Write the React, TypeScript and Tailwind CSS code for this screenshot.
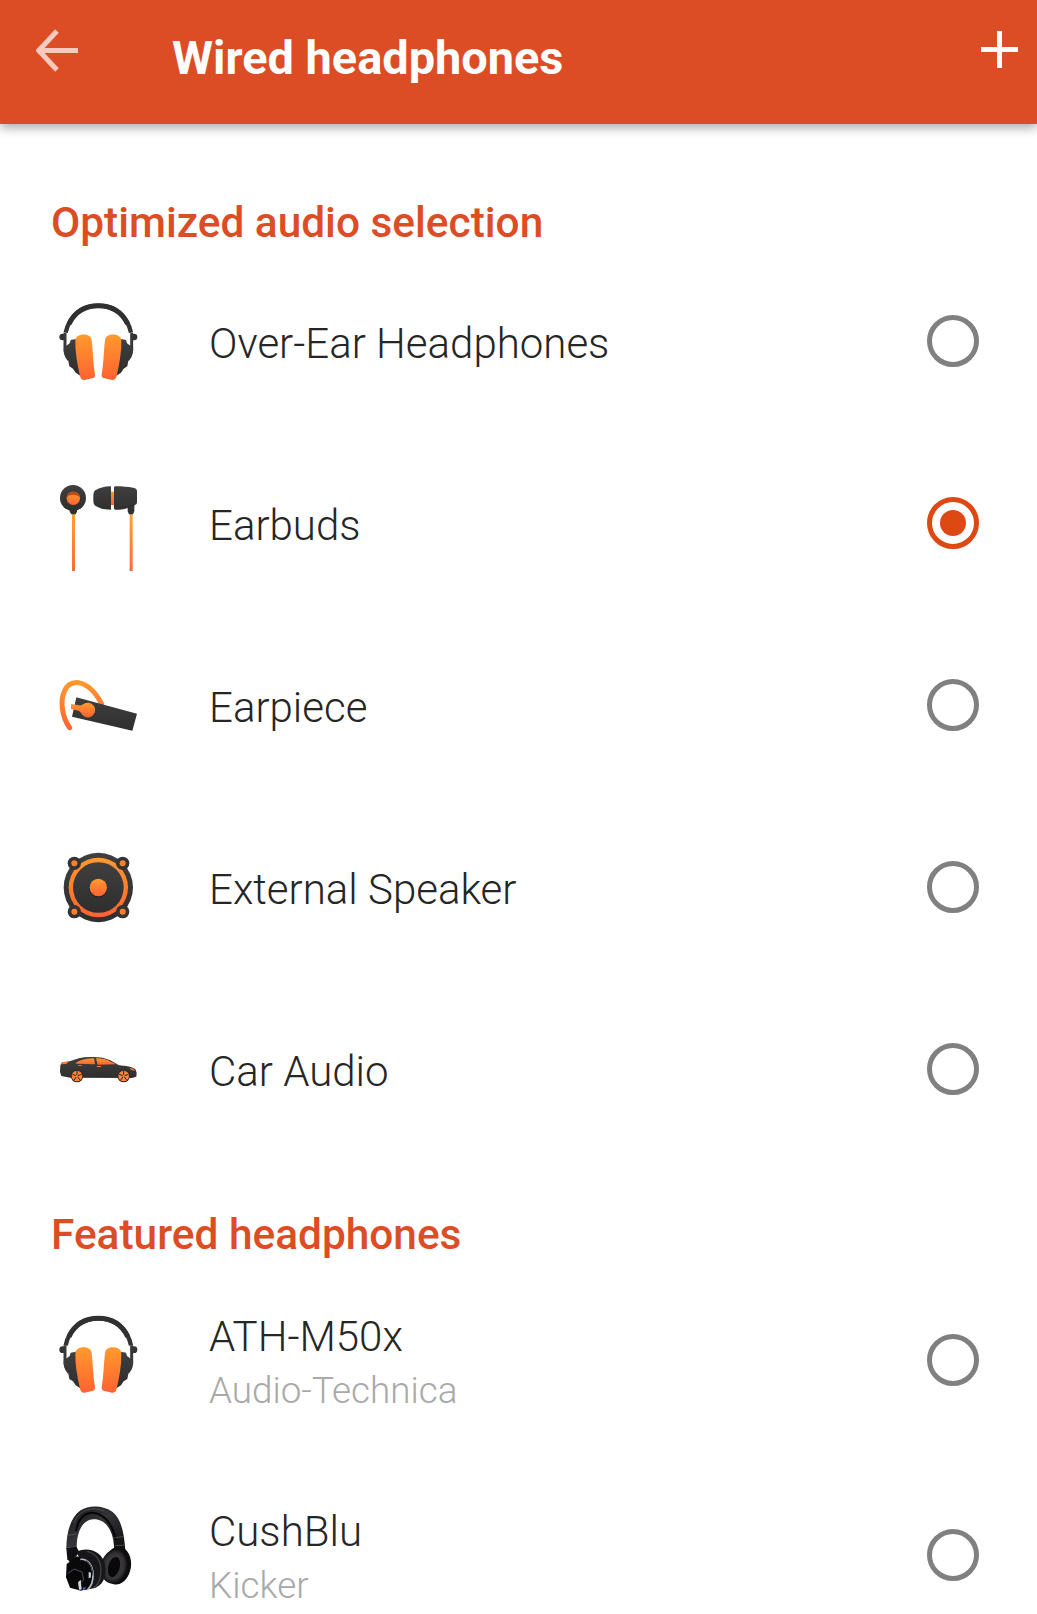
import type { ReactNode } from 'react';

function Defs() {
  return (
    <svg className="absolute h-0 w-0" aria-hidden="true">
      <defs>
        <linearGradient id="orange" x1="0" y1="0" x2="0" y2="1">
          <stop offset="0" stopColor="#ff9a2e" />
          <stop offset="1" stopColor="#ff6231" />
        </linearGradient>
        <linearGradient id="cord" gradientUnits="userSpaceOnUse" x1="0" y1="116" x2="0" y2="288">
          <stop offset="0" stopColor="#ffa23c" />
          <stop offset="1" stopColor="#f96a3c" />
        </linearGradient>
        <linearGradient id="hook" gradientUnits="userSpaceOnUse" x1="0" y1="45" x2="0" y2="195">
          <stop offset="0" stopColor="#ff9a2e" />
          <stop offset="1" stopColor="#ff6231" />
        </linearGradient>
        <linearGradient id="dark" x1="0" y1="0" x2="0" y2="1">
          <stop offset="0" stopColor="#3f3f3f" />
          <stop offset="1" stopColor="#2e2e2e" />
        </linearGradient>
        <linearGradient id="band" x1="0" y1="0" x2="1" y2="1">
          <stop offset="0" stopColor="#151517" />
          <stop offset="0.45" stopColor="#343438" />
          <stop offset="1" stopColor="#0b0b0c" />
        </linearGradient>
        <radialGradient id="cushion">
          <stop offset="0" stopColor="#0c0c0d" />
          <stop offset="0.5" stopColor="#3b383b" />
          <stop offset="0.75" stopColor="#343235" />
          <stop offset="1" stopColor="#101011" />
        </radialGradient>
      </defs>
    </svg>
  );
}

function OverEar({ box = '0 -12 300 330' }: { box?: string }) {
  return (
    <svg viewBox={box} className="h-[110px] w-[100px]">
      <path d="M47 128C58 76 97 47 145 47s87 29 98 81" fill="none" stroke="#333" strokeWidth="13" />
      <path d="M57 102C74 66 106 47 145 47s71 19 88 55" fill="none" stroke="#303030" strokeWidth="15" />
      <circle cx="38" cy="141" r="10" fill="#333" />
      <circle cx="252" cy="141" r="10" fill="#333" />
      <path d="M45 128v40c-2 18 3 32 12 42M245 128v40c2 18-3 32-12 42" fill="none" stroke="#383838" strokeWidth="9" />
      <path d="M78 147l-16 3-3 10-11 8-7 14 5 18 8 8 4 21 11 7 8 12 14 9z" fill="url(#dark)" />
      <path d="M212 147l16 3 3 10 11 8 7 14-5 18-8 8-4 21-11 7-8 12-14 9z" fill="url(#dark)" />
      <path d="M76 150c1-19 45-24 49 0 4 34 4 70 10 104 1 6-3 10-9 11l-22 5c-7 1-12-4-14-12-8-36-15-72-14-108z" fill="url(#orange)" />
      <path d="M214 150c-1-19-45-24-49 0-4 34-4 70-10 104-1 6 3 10 9 11l22 5c7 1 12-4 14-12 8-36 15-72 14-108z" fill="url(#orange)" />
    </svg>
  );
}

function Earbuds() {
  return (
    <svg viewBox="0 -21 300 330" className="h-[110px] w-[100px]">
      <path d="M66 116h9v172h-9zM239 116h9v172h-9z" fill="url(#cord)" />
      <path d="M58 98h24l-1 12-4 8H64l-5-8z" fill="#333" />
      <circle cx="69" cy="69" r="39" fill="url(#dark)" />
      <circle cx="70" cy="70" r="20" fill="url(#orange)" />
      <path d="M50 68c3-24 37-24 40 0-9-12-31-12-40 0z" fill="#bb4b13" />
      <path d="M182 50h12v40h-12z" fill="url(#orange)" />
      <path d="M183 34v70c-21 0-37-5-47-12-5-4-6-8-6-23s1-19 6-23c10-7 26-12 47-12z" fill="url(#dark)" />
      <path d="M192 38c0-3 2-4 6-4 20 0 36 2 51 4 9 1 12 4 12 12v32c0 5-3 7-8 9v18l-4 9h-12l-4-9V99c-13 5-24 5-36 5-4 0-5-2-5-5z" fill="url(#dark)" />
      <path d="M233 99c4-7 11-10 20-8" fill="none" stroke="#1f1f1f" strokeWidth="2" />
    </svg>
  );
}

function Earpiece() {
  return (
    <svg viewBox="0 -45 300 330" className="h-[110px] w-[100px]">
      <path d="M59 188C34 154 31 105 43 79c8-19 24-28 43-26 30 6 51 29 69 64" fill="none" stroke="url(#hook)" strokeWidth="15" strokeLinecap="round" />
      <path d="M79 97l182 49-14 51L66 155z" fill="url(#dark)" />
      <path d="M63 117l24 4c7 1 9-1 14-4a22 22 0 1 1-3 34c-6-9-9-14-19-15l-16-4z" fill="url(#orange)" />
    </svg>
  );
}

function Speaker() {
  return (
    <svg viewBox="0 -24 300 330" className="h-[110px] w-[100px]">
      <circle cx="145" cy="142.500" r="104" fill="url(#dark)" />
      <circle cx="145" cy="142.500" r="89" fill="url(#orange)" />
      <circle cx="145" cy="142.500" r="76" fill="url(#dark)" />
      <g fill="#343434">
        <circle cx="73" cy="70" r="20" />
        <circle cx="218" cy="70" r="20" />
        <circle cx="73" cy="215" r="20" />
        <circle cx="218" cy="215" r="20" />
      </g>
      <g fill="#fb8131">
        <circle cx="73" cy="70" r="9" />
        <circle cx="218" cy="70" r="9" />
        <circle cx="73" cy="215" r="9" />
        <circle cx="218" cy="215" r="9" />
      </g>
      <circle cx="145" cy="146" r="27" fill="#252525" />
      <circle cx="145" cy="142.500" r="26" fill="url(#orange)" />
    </svg>
  );
}

function Wheel({ cx }: { cx: number }) {
  return (
    <g>
      <circle cx={cx} cy="93" r="19" fill="#292929" />
      <circle cx={cx} cy="93" r="16" fill="#ff8436" />
      <path d={`M${cx} 93v-15M${cx} 93l14-5M${cx} 93l9 12M${cx} 93l-9 12M${cx} 93l-14-5`} stroke="#33261f" strokeWidth="3" />
      <circle cx={cx} cy="93" r="4" fill="#e27531" />
    </g>
  );
}

function Car() {
  return (
    <svg viewBox="0 -93 300 330" className="h-[110px] w-[100px]">
      <path d="M31 61l5-9 23-3c18-7 36-13 60-13 27-1 46 2 62 10l26 15c20 1 40 4 50 13l3 10-1 11-13 4-185-1-27-5-4-12z" fill="url(#dark)" />
      <path d="M76 55c12-9 27-14 56-15l3 18-54-2zM138 40c24 0 39 6 59 18l-54 1z" fill="url(#orange)" />
      <path d="M33 58l5-7 18 0-8 6zM238 68l12 3 5 7-12-4zM141 63h12v3h-12zM84 60h12v2H84z" fill="#fb7d30" />
      <Wheel cx={81} />
      <Wheel cx={221} />
    </svg>
  );
}

function CushBlu() {
  return (
    <svg viewBox="0 15 300 330" className="h-[110px] w-[100px]">
      <path d="M49 162C49 116 60 68 92 46c25-17 70-15 96 5 26 22 34 62 38 114l-33 4c-1-26-4-47-13-64-12-23-30-33-50-32-34 2-51 38-50 92z" fill="url(#band)" />
      <path d="M78 108C86 60 118 44 148 58c27 14 42 40 50 78" fill="none" stroke="#050506" strokeWidth="6" />
      <path d="M72 84C86 46 122 32 163 48" fill="none" stroke="#505055" strokeWidth="3" />
      <path d="M53 121l26-4M51 158l29-3M190 129l32-5M196 152l30-2" stroke="#606065" strokeWidth="2" />
      <path d="M49 160l30-5 9 16-25 34-11-12z" fill="#101012" />
      <ellipse cx="202" cy="212" rx="41" ry="57" transform="rotate(8 202 212)" fill="#0d0d0e" />
      <ellipse cx="192" cy="214" rx="39" ry="52" transform="rotate(14 192 214)" fill="url(#cushion)" />
      <ellipse cx="192" cy="216" rx="17" ry="31" transform="rotate(16 192 216)" fill="#080809" />
      <path d="M80 170c32-15 68-4 82 28 11 35 3 68-25 80l-34 8-10-83z" fill="#171719" />
      <path d="M112 169c28 7 44 31 40 67-2 24-10 37-22 42" fill="none" stroke="#414146" strokeWidth="4" />
      <path d="M50 207l30-23 33 10 15 29-5 54-30 10-33-9-12-31z" fill="#09090a" />
      <path d="M91 193c22-3 37 18 38 44 1 21-6 38-17 48" fill="none" stroke="#b9bbc6" strokeWidth="5" />
      <path d="M108 196c15 11 21 28 20 45" fill="none" stroke="#33343a" strokeWidth="3" />
      <path d="M54 235l18-13 24 9 5 24-15 12 2 19" fill="none" stroke="#4c4e56" strokeWidth="3" />
      <path d="M84 262l8-8 3 29-7 2zM116 231l7 2-1 15-6 2z" fill="#d3d6df" />
      <path d="M98 278l9-3-1 8-7 2z" fill="#485ad2" />
    </svg>
  );
}

function Radio({ selected }: { selected?: boolean }) {
  return selected ? (
    <span className="flex size-[52px] items-center justify-center rounded-full border-[5px] border-[#de4813]">
      <span className="size-[26px] rounded-full bg-[#de4813]" />
    </span>
  ) : (
    <span className="size-[52px] rounded-full border-[5px] border-[#808080]" />
  );
}

function Row({ icon, label, brand, selected }: { icon: ReactNode; label: string; brand?: string; selected?: boolean }) {
  return (
    <li className={`flex shrink-0 items-center pr-[58px] pl-[50px] ${brand ? 'h-[195px]' : 'h-[182px]'}`}>
      {icon}
      <div className="ml-[59px] flex-1 font-light whitespace-nowrap">
        <p className="pt-[5px] text-[42px] leading-[50px] text-[#262626]">{label}</p>
        {brand && <p className="pt-[7px] text-[36.800px] leading-[44px] text-[#a9a9a9]">{brand}</p>}
      </div>
      <Radio selected={selected} />
    </li>
  );
}

export default function App() {
  return (
    <div className="flex h-[1614px] w-[1037px] flex-col overflow-hidden bg-white font-['Roboto',sans-serif]">
      <Defs />
      <header className="flex h-[124px] shrink-0 bg-[#dc4d26] pt-[29px] pr-[19px] pl-[36px] shadow-[0_4px_10px_rgba(0,0,0,0.33)]">
        <svg viewBox="0 0 42 43" className="h-[43px] w-[42px]">
          <path d="M42 21.500H4M21 2L2.800 21.500 21 41" fill="none" stroke="#f7c9bf" strokeWidth="5" />
        </svg>
        <h1 className="ml-[94px] flex-1 pt-px text-[46.900px] leading-[56px] font-bold text-white">Wired headphones</h1>
        <svg viewBox="0 0 37 37" className="mt-[2px] size-[37px]">
          <path d="M18.500 0v37M0 18.500h37" stroke="#fff" strokeWidth="5" />
        </svg>
      </header>
      <h2 className="flex h-[126px] shrink-0 items-center pt-[72px] pl-[51px] text-[42.400px] leading-[50px] font-medium text-[#dc4d26]">
        Optimized audio selection
      </h2>
      <ul className="flex shrink-0 flex-col">
        <Row icon={<OverEar />} label="Over-Ear Headphones" />
        <Row icon={<Earbuds />} label="Earbuds" selected />
        <Row icon={<Earpiece />} label="Earpiece" />
        <Row icon={<Speaker />} label="External Speaker" />
        <Row icon={<Car />} label="Car Audio" />
      </ul>
      <h2 className="flex h-[102px] shrink-0 items-center pt-[47px] pl-[51px] text-[42.400px] leading-[50px] font-medium text-[#dc4d26]">
        Featured headphones
      </h2>
      <ul className="flex shrink-0 flex-col">
        <Row icon={<OverEar box="0 7 300 330" />} label="ATH-M50x" brand="Audio-Technica" />
        <Row icon={<CushBlu />} label="CushBlu" brand="Kicker" />
      </ul>
    </div>
  );
}
